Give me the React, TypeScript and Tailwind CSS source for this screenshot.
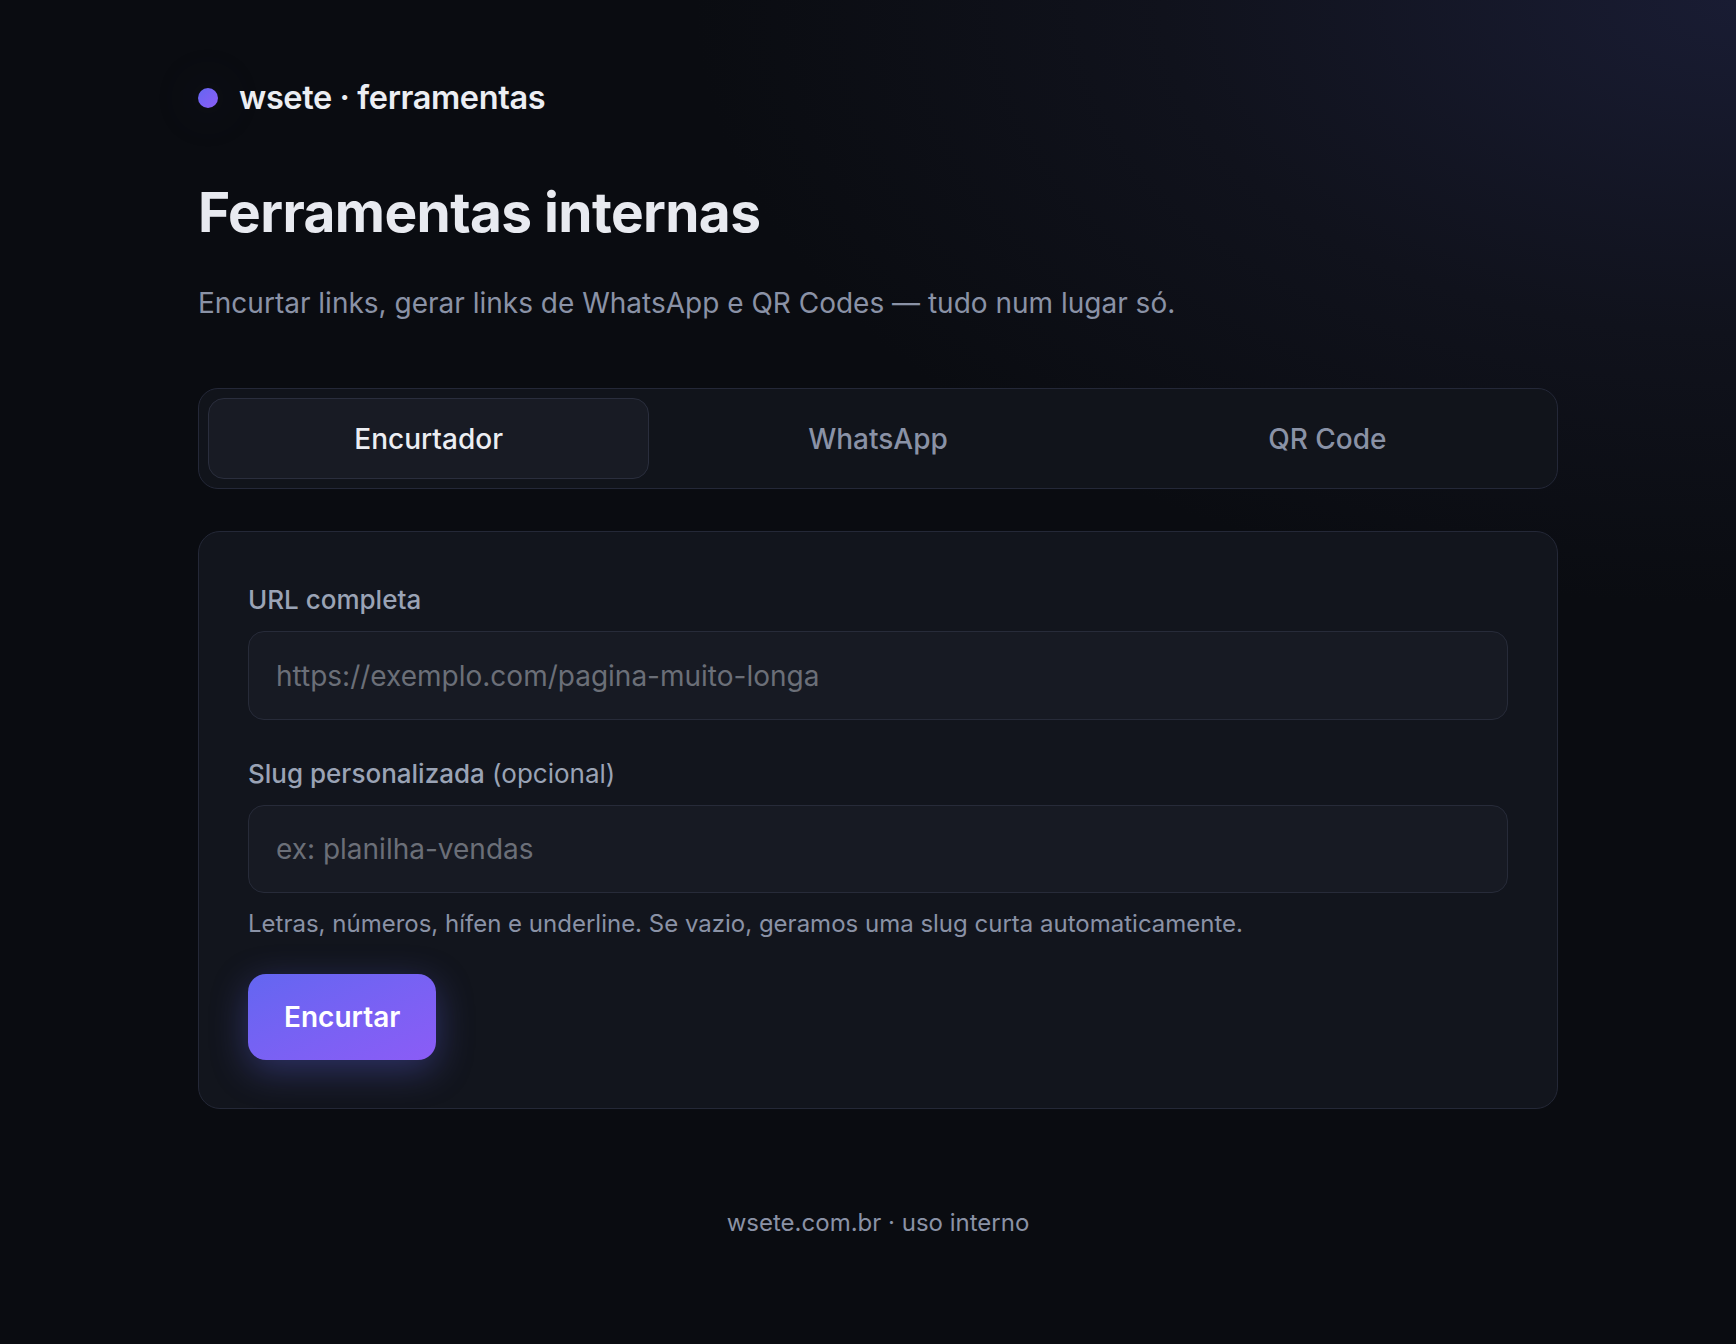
import React from "react";

export default function App() {
  const font = { fontFamily: "Inter, 'Noto Sans', sans-serif" };
  return (
    <div
      style={font}
      className="min-h-screen w-full bg-[#0a0c11] bg-[radial-gradient(ellipse_60%_45%_at_100%_0%,#191c33_0%,#10121c_55%,transparent_100%)]"
    >
      <div className="pl-[198px] pt-[78px]">
        <div className="w-[1360px] flex flex-col">
          {/* Brand */}
          <div className="flex items-center gap-[21px] h-[40px]">
            <span className="block w-[20px] h-[20px] rounded-full bg-gradient-to-br from-[#6366f1] to-[#8b5cf6] shadow-[0_0_50px_12px_rgba(120,120,160,0.06)]" />
            <span className="text-[32.5px] leading-[40px] font-semibold text-[#eceef3] tracking-[-0.012em]">
              wsete · ferramentas
            </span>
          </div>

          {/* Title */}
          <h1 className="mt-[64px] text-[55px] leading-[60px] font-bold text-[#e8eaf0] tracking-[-0.011em]">
            Ferramentas internas
          </h1>

          {/* Subtitle */}
          <p className="mt-[41px] text-[28px] leading-[40px] text-[#8a92a6]">
            Encurtar links, gerar links de WhatsApp e QR Codes — tudo num lugar só.
          </p>

          {/* Tabs */}
          <div className="mt-[65px] grid grid-cols-3 gap-[8px] p-[9px] rounded-[20px] border border-[#242838] bg-[#11141b]">
            <button className="h-[81px] rounded-[16px] border border-[#2a2e3d] bg-[#181b24] text-[28px] font-medium text-[#eceef3]">
              Encurtador
            </button>
            <button className="h-[81px] rounded-[16px] border border-transparent text-[28px] font-medium text-[#8a92a6]">
              WhatsApp
            </button>
            <button className="h-[81px] rounded-[16px] border border-transparent text-[28px] font-medium text-[#8a92a6]">
              QR Code
            </button>
          </div>

          {/* Card */}
          <div className="mt-[42px] rounded-[22px] border border-[#242837] bg-[#12151d] px-[49px] pt-[48px] pb-[48px] flex flex-col">
            <label className="text-[26px] leading-[39px] font-medium text-[#9aa3b5]">
              URL completa
            </label>
            <input
              readOnly
              placeholder="https://exemplo.com/pagina-muito-longa"
              className="mt-[12px] h-[89px] w-full rounded-[16px] border border-[#272b39] bg-[#171a23] px-[27px] text-[28px] text-[#e8eaf0] placeholder:text-[#6b6f78] outline-none"
            />

            <label className="mt-[34px] text-[26px] leading-[39px] text-[#9aa3b5]">
              <span className="font-medium">Slug personalizada</span>{" "}
              <span className="font-normal">(opcional)</span>
            </label>
            <input
              readOnly
              placeholder="ex: planilha-vendas"
              className="mt-[12px] h-[88px] w-full rounded-[16px] border border-[#272b39] bg-[#171a23] px-[27px] text-[28px] text-[#e8eaf0] placeholder:text-[#6b6f78] outline-none"
            />
            <p className="mt-[13px] text-[24px] leading-[35px] text-[#8a92a6]">
              Letras, números, hífen e underline. Se vazio, geramos uma slug curta automaticamente.
            </p>

            <div className="mt-[33px]">
              <button className="h-[86px] px-[36px] rounded-[18px] bg-gradient-to-br from-[#6366f1] to-[#8b5cf6] text-[28px] font-semibold text-white shadow-[0_10px_36px_rgba(99,102,241,0.35)]">
                Encurtar
              </button>
            </div>
          </div>

          {/* Footer */}
          <p className="mt-[96px] pb-[100px] text-center text-[24px] leading-[36px] text-[#8a92a6]">
            wsete.com.br · uso interno
          </p>
        </div>
      </div>
    </div>
  );
}
